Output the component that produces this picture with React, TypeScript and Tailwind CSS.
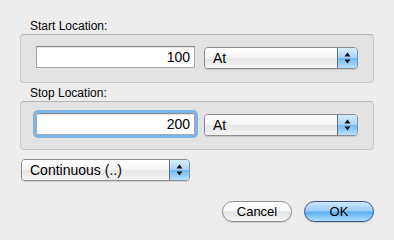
import React from 'react';

const font = { fontFamily: '"Liberation Sans", Arial, sans-serif' };

const Arrows: React.FC = () => (
  <svg width="7" height="12" viewBox="0 0 7 12">
    <path d="M3.5 0.5 L6.5 4.5 L0.5 4.5 Z" fill="#111" />
    <path d="M3.5 11.5 L6.5 7.5 L0.5 7.5 Z" fill="#111" />
  </svg>
);

const Popup: React.FC<{ label: string; width: string }> = ({ label, width }) => (
  <div
    className={`${width} h-[22px] flex rounded-[4px] border border-[#8c8c8c] overflow-hidden shadow-[0_1px_1px_rgba(0,0,0,0.12)]`}
  >
    <div className="flex-1 flex items-center pl-[8px] text-[14px] text-black bg-[linear-gradient(#ffffff,#f6f6f6_45%,#e6e6e6_55%,#f4f4f4)]">
      {label}
    </div>
    <div className="w-[20px] flex items-center justify-center border-l border-[#5a6fa8] bg-[linear-gradient(#d6ecfd,#a9d3f7_48%,#72baf3_52%,#b9e2fd)]">
      <Arrows />
    </div>
  </div>
);

const Field: React.FC<{ value: string; focused?: boolean }> = ({ value, focused }) => (
  <div
    className={`w-[160px] h-[22px] flex items-center justify-end pr-[4px] bg-white text-[14px] text-black border border-[#a8a8a8] border-t-[#8a8a8a] shadow-[inset_0_1px_1px_rgba(0,0,0,0.12)] ${
      focused ? 'outline outline-[3px] outline-[#7eb3e6] rounded-[2px]' : ''
    }`}
  >
    {value}
  </div>
);

const Group: React.FC<{ label: string; value: string; focused?: boolean }> = ({ label, value, focused }) => (
  <div className="flex flex-col">
    <div className="pl-[10px] h-[15px] text-[12px] leading-[14px] text-black">{label}</div>
    <div className="h-[49px] rounded-[4px] border border-[#c9c9c9] border-t-[#b4b4b4] bg-[#e3e3e3] flex items-start pt-[11px] px-[15px] gap-[9px]">
      <Field value={value} focused={focused} />
      <div className="mt-[1px]">
        <Popup label="At" width="w-[154px]" />
      </div>
    </div>
  </div>
);

const Button: React.FC<{ label: string; primary?: boolean }> = ({ label, primary }) => (
  <div
    className={`w-[70px] h-[21px] rounded-full flex items-center justify-center text-[13px] text-black border shadow-[0_1px_1px_rgba(0,0,0,0.15)] ${
      primary
        ? 'border-[#3b4f8f] bg-[linear-gradient(#cfe8fd,#99cdf6_45%,#5fb0f1_55%,#aee0fe)]'
        : 'border-[#8e8e8e] bg-[linear-gradient(#ffffff,#f7f7f7_45%,#e4e4e4_55%,#f6f6f6)]'
    }`}
  >
    {label}
  </div>
);

export default function App() {
  return (
    <div className="w-[394px] h-[240px] bg-[#ededed] flex flex-col px-[20px] pt-[19px]" style={font}>
      <Group label="Start Location:" value="100" />
      <div className="mt-[3px]">
        <Group label="Stop Location:" value="200" focused />
      </div>
      <div className="mt-[9px] pl-[1px]">
        <Popup label="Continuous (..)" width="w-[169px]" />
      </div>
      <div className="mt-[20px] flex justify-end gap-[12px]">
        <Button label="Cancel" />
        <Button label="OK" primary />
      </div>
    </div>
  );
}
